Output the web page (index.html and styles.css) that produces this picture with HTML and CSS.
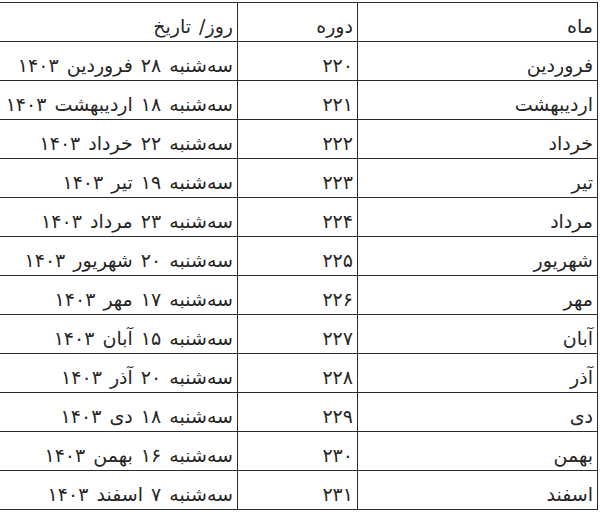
FILE: index.html
```html
<!DOCTYPE html>
<html lang="fa">
<head>
<meta charset="utf-8">
<title>جدول</title>
<link rel="stylesheet" href="styles.css">
</head>
<body>
<div class="wrap">
<table class="grid" dir="rtl">
<colgroup><col class="c-month"><col class="c-period"><col class="c-date"></colgroup>
<tbody>
<tr><td>ماه</td><td>دوره</td><td>روز/ تاریخ</td></tr>
<tr><td>فروردین</td><td>۲۲۰</td><td>سه‌شنبه ۲۸ فروردین ۱۴۰۳</td></tr>
<tr><td>اردیبهشت</td><td>۲۲۱</td><td>سه‌شنبه ۱۸ اردیبهشت ۱۴۰۳</td></tr>
<tr><td>خرداد</td><td>۲۲۲</td><td>سه‌شنبه ۲۲ خرداد ۱۴۰۳</td></tr>
<tr><td>تیر</td><td>۲۲۳</td><td>سه‌شنبه ۱۹ تیر ۱۴۰۳</td></tr>
<tr><td>مرداد</td><td>۲۲۴</td><td>سه‌شنبه ۲۳ مرداد ۱۴۰۳</td></tr>
<tr><td>شهریور</td><td>۲۲۵</td><td>سه‌شنبه ۲۰ شهریور ۱۴۰۳</td></tr>
<tr><td>مهر</td><td>۲۲۶</td><td>سه‌شنبه ۱۷ مهر ۱۴۰۳</td></tr>
<tr><td>آبان</td><td>۲۲۷</td><td>سه‌شنبه ۱۵ آبان ۱۴۰۳</td></tr>
<tr><td>آذر</td><td>۲۲۸</td><td>سه‌شنبه ۲۰ آذر ۱۴۰۳</td></tr>
<tr><td>دی</td><td>۲۲۹</td><td>سه‌شنبه ۱۸ دی ۱۴۰۳</td></tr>
<tr><td>بهمن</td><td>۲۳۰</td><td>سه‌شنبه ۱۶ بهمن ۱۴۰۳</td></tr>
<tr><td>اسفند</td><td>۲۳۱</td><td>سه‌شنبه ۷ اسفند ۱۴۰۳</td></tr>
</tbody>
</table>
</div>
</body>
</html>
```

FILE: styles.css
```css
html, body {
  margin: 0;
  padding: 0;
  background: #ffffff;
}
.wrap {
  padding-top: 2px;
  overflow: hidden;
  width: 600px;
}
.grid {
  border-collapse: collapse;
  table-layout: fixed;
  width: 600px;
  margin-left: -3px;
  font-family: "DejaVu Sans", sans-serif;
  font-size: 19px;
  word-spacing: 2px;
  color: #262626;
}
.c-month { width: 240px; }
.c-period { width: 120px; }
.c-date { width: 240px; }
.grid td {
  border: 1px solid #2a2a2a;
  height: 39px;
  padding: 0 4px 4px 0;
  box-sizing: border-box;
  vertical-align: bottom;
  text-align: right;
  white-space: nowrap;
  line-height: 22px;
}
```
